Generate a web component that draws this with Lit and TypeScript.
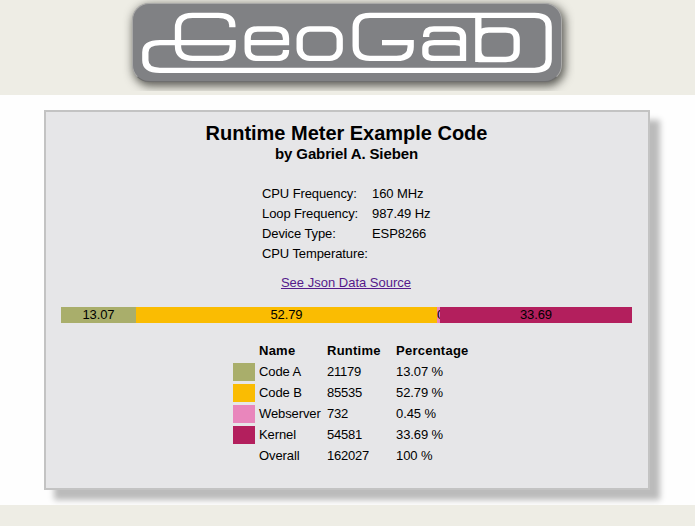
import { LitElement, html, css, svg } from "lit";
import { customElement } from "lit/decorators.js";

@customElement("geo-logo")
class GeoLogo extends LitElement {
  static styles = css`
    :host { display: block; height: 91px; width: 456px; overflow: hidden; }
    .badge {
      box-sizing: border-box; width: 430px; height: 79px; margin: 3px 0 0 13px;
      border: 1px solid #a9a9a8; border-bottom-color: #6e6e6e; border-radius: 17px;
      background: #808184; box-shadow: 2px 3px 10px 1px rgba(40, 40, 35, 0.75);
    }
    svg { display: block; margin: -4px 0 0 -13px; overflow: visible; }
    .line { fill: none; stroke: #fff; stroke-width: 16.2; }
  `;
  render() {
    return html`<div class="badge"><svg width="456" height="91" viewBox="0 0 456 91" role="img" aria-label="GeoGab">
      ${svg`<g class="line" transform="scale(.39 .33333)">
        <path d="M288 82V76Q288 46 252 46H186Q148.700 46 148.700 84V138Q148.700 175 186 175H252Q288.900 175 288.900 140V128H102.600Q65 128 65 157V181Q65 211 102 211H1063Q1099.100 211 1099.100 178V80Q1099.100 46 1063 46H641Q604.300 46 604.300 82V138Q604.300 175 641 175H709Q745.300 175 745.300 140V128H671.800"/>
        <path d="M425.600 150V153Q425.600 175 402 175H353Q327.400 175 327.400 147V115Q327.400 87 353 87H399Q425.600 87 425.600 115V128H327.400"/>
        <rect x="460.700" y="87" width="102.600" height="88" rx="26" ry="29"/>
        <path d="M785 111V106Q785 87 805 87H853Q879.500 87 879.500 112V183M879.500 175H806Q783 175 783 158V145Q783 128 806 128H859Q877 128 879.500 139"/>
        <path d="M918.800 46V186M918.800 178.500H989Q1017.100 178.500 1017.100 150V118Q1017.100 90 989 90H946Q918.800 90 918.800 118V150Q918.800 178.500 942 178.500"/>
      </g>`}
    </svg></div>`;
  }
}

interface Task { name: string; runtime: number; percent: string; tone: string; width: number; }

const tasks: Task[] = [
  { name: "Code A", runtime: 21179, percent: "13.07", tone: "olive", width: 75 },
  { name: "Code B", runtime: 85535, percent: "52.79", tone: "amber", width: 301 },
  { name: "Webserver", runtime: 732, percent: "0.45", tone: "pink", width: 3 },
  { name: "Kernel", runtime: 54581, percent: "33.69", tone: "crimson", width: 192 },
];

@customElement("app-root")
class AppRoot extends LitElement {
  static styles = css`
    :host {
      display: flex; flex-direction: column; height: 526px; overflow: hidden; background: #fefefe; color: #000;
      font: 13px/20px "Liberation Sans", Arial, sans-serif; letter-spacing: -0.1px;
    }
    header { height: 95px; flex: none; padding-left: 119px; background: #eeede5; }
    footer { height: 21px; flex: none; background: #eeede5; }
    main { height: 410px; box-sizing: border-box; flex: none; padding: 15px 45px 0 44px; }
    .card {
      box-sizing: border-box; height: 380px; padding: 10px 16px 0 15px; border: 2px solid #c3c3c3;
      background: #e6e6e8; box-shadow: 10px 10px 6px #bbb;
      display: flex; flex-direction: column;
    }
    h1 { margin: 0; font-size: 20px; line-height: 22px; text-align: center; letter-spacing: -0.02px; }
    h2 { margin: 0; font-size: 15px; line-height: 20px; text-align: center; letter-spacing: -0.12px; }
    .info { display: grid; grid-template-columns: 110px auto; margin: 20px 0 0 201px; }
    .link { margin: 9px 1px 0 0; text-align: center; }
    a { color: #551a8b; text-decoration: underline; letter-spacing: 0; }
    .bar { display: flex; height: 16px; margin-top: 14px; line-height: 16px; }
    .seg { flex: none; overflow: hidden; text-align: center; }
    .olive { background: #a9ae6b; }
    .amber { background: #fabc02; }
    .pink { background: #e986bc; }
    .crimson { background: #b31f5d; }
    .table {
      display: grid; grid-template-columns: 22px 64px 65px auto; column-gap: 4px; grid-auto-rows: 21px;
      line-height: 21px; margin: 17px 0 0 172px;
    }
    .head { font-weight: bold; letter-spacing: 0.25px; }
    .runtime { letter-spacing: -0.25px; }
    .swatch { height: 18px; margin-top: 2px; }
  `;
  render() {
    return html`
      <header><geo-logo></geo-logo></header>
      <main>
        <section class="card">
          <h1>Runtime Meter Example Code</h1>
          <h2>by Gabriel A. Sieben</h2>
          <div class="info">
            <span>CPU Frequency:</span><span>160 MHz</span>
            <span>Loop Frequency:</span><span>987.49 Hz</span>
            <span>Device Type:</span><span>ESP8266</span>
            <span>CPU Temperature:</span><span></span>
          </div>
          <div class="link"><a>See Json Data Source</a></div>
          <div class="bar">
            ${tasks.map((t) => html`<div class="seg ${t.tone}" style="width:${t.width}px">${t.percent}</div>`)}
          </div>
          <div class="table">
            <span></span><span class="head">Name</span><span class="head">Runtime</span><span class="head">Percentage</span>
            ${tasks.map((t) => html`<span class="swatch ${t.tone}"></span><span>${t.name}</span><span class="runtime">${t.runtime}</span><span>${t.percent} %</span>`)}
            <span></span><span>Overall</span><span class="runtime">162027</span><span>100 %</span>
          </div>
        </section>
      </main>
      <footer></footer>
    `;
  }
}
